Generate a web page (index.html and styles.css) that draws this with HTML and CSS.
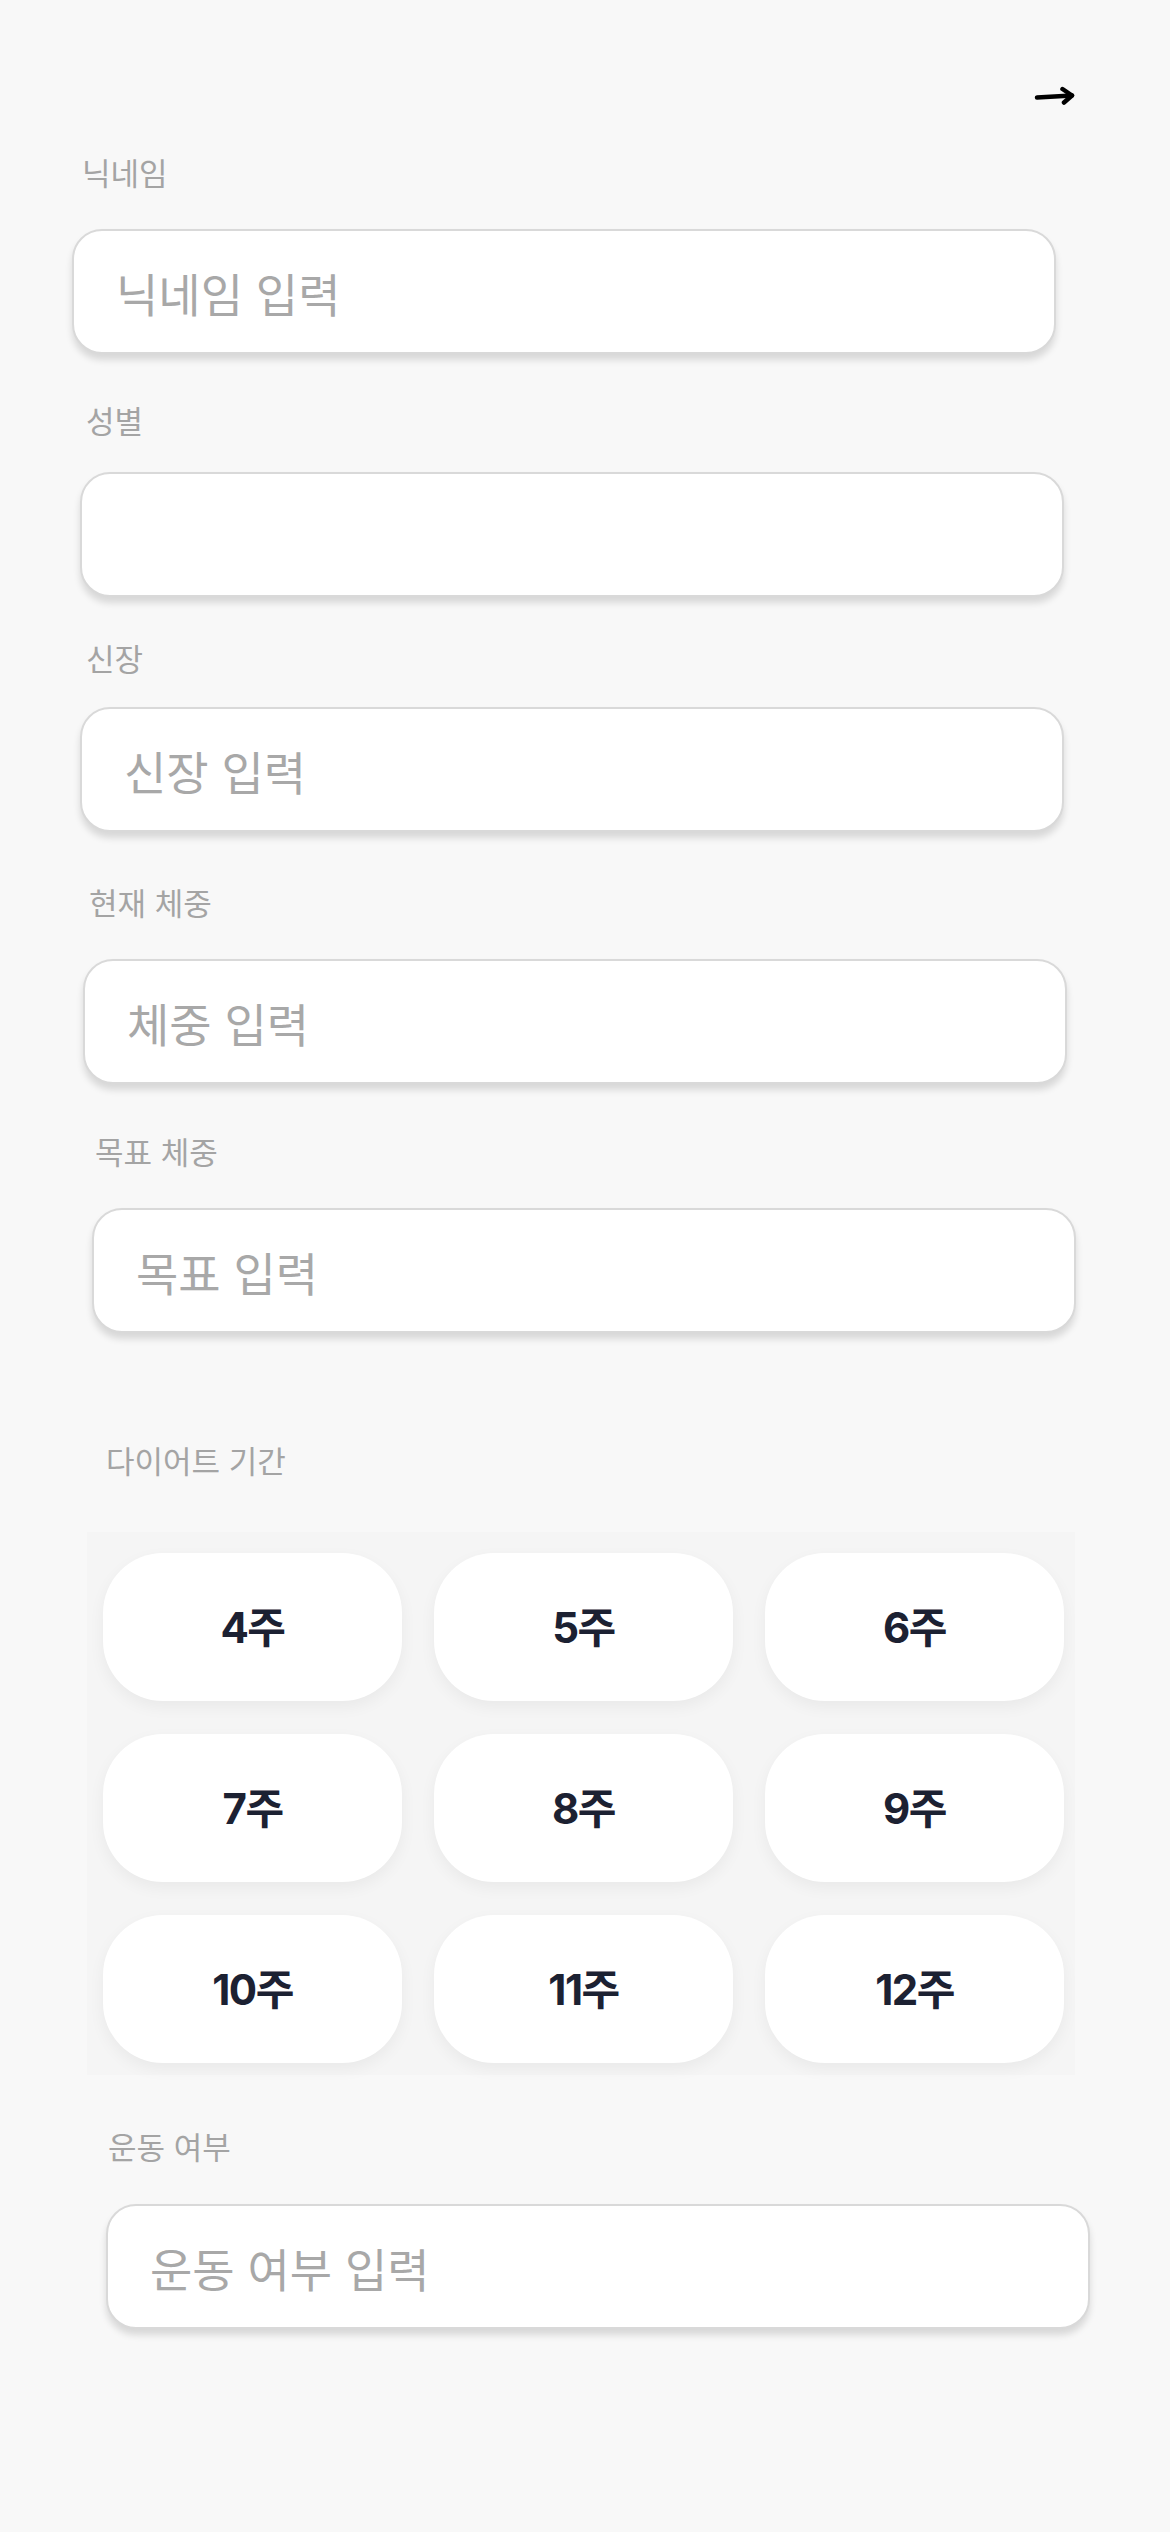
FILE: index.html
```html
<!DOCTYPE html>
<html lang="ko">
<head>
    <meta charset="UTF-8">
    <meta name="viewport" content="width=device-width, initial-scale=1.0">
    <title>프로필 입력</title>
    <link rel="stylesheet" href="styles.css">
</head>
<body>

<div class="screen">
    <div class="top-bar">
        <button class="next-btn" type="button" aria-label="다음">
            <svg width="42" height="20" viewBox="0 0 42 20">
                <path d="M3 11.5 L38 9.5" />
                <path d="M28.5 3 L38 9.5 L30 16.5" />
            </svg>
        </button>
    </div>

    <form class="profile-form">
        <div class="field field-nickname">
            <label class="field-label">닉네임</label>
            <input class="text-input" type="text" placeholder="닉네임 입력">
        </div>

        <div class="field field-gender">
            <label class="field-label">성별</label>
            <input class="text-input" type="text">
        </div>

        <div class="field field-height">
            <label class="field-label">신장</label>
            <input class="text-input" type="text" placeholder="신장 입력">
        </div>

        <div class="field field-weight">
            <label class="field-label">현재 체중</label>
            <input class="text-input" type="text" placeholder="체중 입력">
        </div>

        <div class="field field-goal">
            <label class="field-label">목표 체중</label>
            <input class="text-input" type="text" placeholder="목표 입력">
        </div>

        <div class="field field-period">
            <label class="field-label">다이어트 기간</label>
            <div class="week-grid">
                <button class="week-btn" type="button">4주</button>
                <button class="week-btn" type="button">5주</button>
                <button class="week-btn" type="button">6주</button>
                <button class="week-btn" type="button">7주</button>
                <button class="week-btn" type="button">8주</button>
                <button class="week-btn" type="button">9주</button>
                <button class="week-btn" type="button">10주</button>
                <button class="week-btn" type="button">11주</button>
                <button class="week-btn" type="button">12주</button>
            </div>
        </div>

        <div class="field field-exercise">
            <label class="field-label">운동 여부</label>
            <input class="text-input" type="text" placeholder="운동 여부 입력">
        </div>
    </form>
</div>

</body>
</html>
```

FILE: styles.css
```css
body {
    margin: 0;
    background-color: #f8f8f8;
    font-family: "Noto Sans CJK KR", "Noto Sans", sans-serif;
}

.screen {
    width: 1170px;
    min-height: 2532px;
    box-sizing: border-box;
}

.top-bar {
    display: flex;
    justify-content: flex-end;
    padding: 86px 94px 0 0;
}

.next-btn {
    background: none;
    border: none;
    padding: 0;
    cursor: pointer;
    line-height: 0;
}

.next-btn svg path {
    fill: none;
    stroke: #000;
    stroke-width: 4.5;
    stroke-linecap: round;
    stroke-linejoin: round;
}

.field {
    display: flex;
    flex-direction: column;
    align-items: flex-start;
}

.field-label {
    font-size: 31px;
    line-height: 40px;
    color: #a4a4a4;
}

.text-input {
    width: 984px;
    height: 125px;
    box-sizing: border-box;
    padding: 0 0 0 42px;
    border: 2px solid #d9d9d9;
    border-radius: 30px;
    background-color: #fff;
    box-shadow: 0 6px 7px rgba(0, 0, 0, 0.13);
    font-family: "Noto Sans CJK KR", "Noto Sans", sans-serif;
    font-size: 46px;
    color: #333;
    outline: none;
}

.text-input::placeholder {
    color: #a8a8a8;
}

/* each block sits a little further right, as in the design */
.field-nickname { margin-top: 46px; }
.field-nickname .field-label { margin: 0 0 37px 82px; }
.field-nickname .text-input { margin-left: 72px; }

.field-gender { margin-top: 46px; }
.field-gender .field-label { margin: 0 0 32px 86px; }
.field-gender .text-input { margin-left: 80px; }

.field-height { margin-top: 41px; }
.field-height .field-label { margin: 0 0 29px 86px; }
.field-height .text-input { margin-left: 80px; }

.field-weight { margin-top: 50px; }
.field-weight .field-label { margin: 0 0 37px 89px; }
.field-weight .text-input { margin-left: 83px; }

.field-goal { margin-top: 47px; }
.field-goal .field-label { margin: 0 0 37px 95px; }
.field-goal .text-input { margin-left: 92px; }

.field-period { margin-top: 107px; }
.field-period .field-label { margin: 0 0 52px 106px; }

.field-exercise { margin-top: 51px; }
.field-exercise .field-label { margin: 0 0 38px 108px; }
.field-exercise .text-input { margin-left: 106px; }

.week-grid {
    margin-left: 87px;
    width: 988px;
    box-sizing: border-box;
    padding: 21px 11px 12px 16px;
    background-color: #f5f5f5;
    display: grid;
    grid-template-columns: repeat(3, 299px);
    grid-auto-rows: 148px;
    column-gap: 32px;
    row-gap: 33px;
}

.week-btn {
    padding: 0 0 5px;
    background-color: #fff;
    border: none;
    border-radius: 60px;
    box-shadow: 0 6px 16px rgba(0, 0, 0, 0.05);
    font-family: Inter, "Noto Sans CJK KR", sans-serif;
    font-size: 42px;
    font-weight: 700;
    letter-spacing: -1.5px;
    color: #1c2132;
    cursor: pointer;
}
```
